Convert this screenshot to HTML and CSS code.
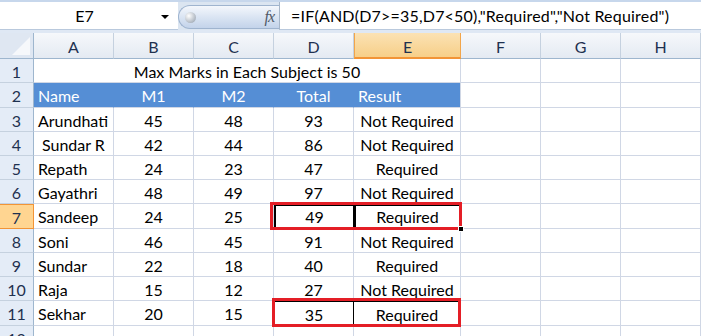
FILE: index.html
```html
<!DOCTYPE html>
<html lang="en">
<head>
    <meta charset="UTF-8">
    <title>Excel - IF AND</title>
    <link rel="stylesheet" href="styles.css">
</head>
<body>

    <!-- Barra della formula -->
    <div class="formula-bar">
        <div class="name-box">
            <span class="cell-ref">E7</span>
            <span class="drop-arrow"></span>
        </div>
        <div class="fx-btn">
            <span class="knob"></span>
            <span class="fx">fx</span>
        </div>
        <div class="formula">=IF(AND(D7&gt;=35,D7&lt;50),"Required","Not Required")</div>
    </div>

    <!-- Foglio -->
    <div class="sheet">
        <div class="corner"></div>
        <div class="col-head">A</div>
        <div class="col-head">B</div>
        <div class="col-head">C</div>
        <div class="col-head">D</div>
        <div class="col-head selected">E</div>
        <div class="col-head">F</div>
        <div class="col-head">G</div>
        <div class="col-head">H</div>

        <div class="row-head">1</div>
        <div class="cell merged">Max Marks in Each Subject is 50</div>
        <div class="cell"></div><div class="cell"></div><div class="cell"></div>

        <div class="row-head">2</div>
        <div class="cell head left">Name</div>
        <div class="cell head">M1</div>
        <div class="cell head">M2</div>
        <div class="cell head">Total</div>
        <div class="cell head left last">Result</div>
        <div class="cell"></div><div class="cell"></div><div class="cell"></div>

        <div class="row-head">3</div>
        <div class="cell left">Arundhati</div><div class="cell">45</div><div class="cell">48</div><div class="cell">93</div><div class="cell">Not Required</div>
        <div class="cell"></div><div class="cell"></div><div class="cell"></div>

        <div class="row-head">4</div>
        <div class="cell left indent">Sundar R</div><div class="cell">42</div><div class="cell">44</div><div class="cell">86</div><div class="cell">Not Required</div>
        <div class="cell"></div><div class="cell"></div><div class="cell"></div>

        <div class="row-head">5</div>
        <div class="cell left">Repath</div><div class="cell">24</div><div class="cell">23</div><div class="cell">47</div><div class="cell">Required</div>
        <div class="cell"></div><div class="cell"></div><div class="cell"></div>

        <div class="row-head">6</div>
        <div class="cell left">Gayathri</div><div class="cell">48</div><div class="cell">49</div><div class="cell">97</div><div class="cell">Not Required</div>
        <div class="cell"></div><div class="cell"></div><div class="cell"></div>

        <div class="row-head selected">7</div>
        <div class="cell left">Sandeep</div><div class="cell">24</div><div class="cell">25</div><div class="cell boxed">49</div><div class="cell active">Required</div>
        <div class="cell"></div><div class="cell"></div><div class="cell"></div>

        <div class="row-head">8</div>
        <div class="cell left">Soni</div><div class="cell">46</div><div class="cell">45</div><div class="cell">91</div><div class="cell">Not Required</div>
        <div class="cell"></div><div class="cell"></div><div class="cell"></div>

        <div class="row-head">9</div>
        <div class="cell left">Sundar</div><div class="cell">22</div><div class="cell">18</div><div class="cell">40</div><div class="cell">Required</div>
        <div class="cell"></div><div class="cell"></div><div class="cell"></div>

        <div class="row-head">10</div>
        <div class="cell left">Raja</div><div class="cell">15</div><div class="cell">12</div><div class="cell">27</div><div class="cell">Not Required</div>
        <div class="cell"></div><div class="cell"></div><div class="cell"></div>

        <div class="row-head">11</div>
        <div class="cell left">Sekhar</div><div class="cell">20</div><div class="cell">15</div><div class="cell thin-left">35</div><div class="cell thin-right">Required</div>
        <div class="cell"></div><div class="cell"></div><div class="cell"></div>

        <div class="row-head">12</div>
        <div class="cell"></div><div class="cell"></div><div class="cell"></div><div class="cell"></div><div class="cell"></div>
        <div class="cell"></div><div class="cell"></div><div class="cell"></div>

        <!-- Riquadri rossi sopra le celle -->
        <div class="red-box box-7"></div>
        <div class="red-box box-11"></div>
        <div class="fill-handle"></div>
    </div>

</body>
</html>
```

FILE: styles.css
```css
/* Stili globali */
* {
    margin: 0;
    padding: 0;
    box-sizing: border-box;
}

body {
    width: 701px;
    height: 336px;
    overflow: hidden;
    background-color: #fff;
    font-family: 'Lato', 'Liberation Sans', sans-serif;
    font-size: 16px;
    color: #000;
}

/* Barra formula */
.formula-bar {
    display: flex;
    height: 33px;
    background-color: #dbe5f1;
    border-top: 2px solid #c7d7ec;
    border-bottom: 3px solid #dfe8f4;
}

.name-box {
    width: 178px;
    display: flex;
    align-items: center;
    background-color: #fff;
    border-bottom: 1px solid #b9c9dd;
}

.cell-ref {
    flex: 1;
    text-align: center;
    padding-left: 8px;
    font-size: 16px;
}

.drop-arrow {
    width: 0;
    height: 0;
    margin-right: 9px;
    margin-top: 2px;
    border-left: 4px solid transparent;
    border-right: 4px solid transparent;
    border-top: 4px solid #000;
}

.fx-btn {
    width: 101px;
    margin-top: 3px;
    margin-bottom: 1px;
    display: flex;
    align-items: center;
    justify-content: space-between;
    padding: 0 5px 0 6px;
    border: 1px solid #9fb4cf;
    border-right: none;
    border-radius: 14px 0 0 14px;
    background: linear-gradient(#f4f7fc, #d8e3f2 55%, #c3d3ea);
}

.knob {
    width: 11px;
    height: 11px;
    border-radius: 50%;
    background: radial-gradient(circle at 35% 35%, #ffffff, #a9b2bd 75%);
}

.fx {
    font-family: 'Liberation Serif', serif;
    font-style: italic;
    font-size: 16px;
    color: #505a68;
    letter-spacing: -1px;
}

.formula {
    flex: 1;
    display: flex;
    align-items: center;
    padding-left: 11px;
    background-color: #fff;
    border-left: 1px solid #a6b6c9;
    border-bottom: 1px solid #b9c9dd;
    white-space: nowrap;
    font-size: 16px;
    letter-spacing: 0.2px;
}

/* Foglio */
.sheet {
    position: relative;
    display: grid;
    grid-template-columns: 34px 80px 80px 80px 80px 107px 80px 80px 80px;
    grid-template-rows: 26px 24px 25px 24px 24px 24px 24px 25px 24px 24px 24px 25px 24px;
}

.corner {
    position: relative;
    background-color: #dfe7f2;
    border-right: 1px solid #9eb6ce;
    border-bottom: 1px solid #9eb6ce;
}

.corner::after {
    content: '';
    position: absolute;
    right: 3px;
    bottom: 3px;
    border-left: 18px solid transparent;
    border-bottom: 18px solid #f6f8fb;
}

.col-head {
    display: flex;
    align-items: center;
    justify-content: center;
    padding-top: 2px;
    background: linear-gradient(#f6f8fb, #e4eaf2);
    border-right: 1px solid #c5d1df;
    border-bottom: 1px solid #9eb6ce;
    color: #1f3150;
}

.col-head.selected {
    background: linear-gradient(#fbe2b4, #f7cf88);
    border-left: 1px solid #f2a54a;
    border-right: 1px solid #f2a54a;
    border-bottom: 2px solid #f29436;
}

.row-head {
    display: flex;
    align-items: center;
    justify-content: center;
    padding-top: 1px;
    background-color: #e4ecf7;
    border-right: 1px solid #9eb6ce;
    border-bottom: 1px solid #c5d1df;
    color: #1f3150;
}

.row-head.selected {
    background-color: #ffd591;
    border: 1px solid #f29436;
    border-left: none;
}

.cell {
    display: flex;
    align-items: center;
    justify-content: center;
    padding-top: 1px;
    border-right: 1px solid #d0d7e5;
    border-bottom: 1px solid #d0d7e5;
    white-space: nowrap;
}

.cell.left {
    justify-content: flex-start;
    padding-left: 4px;
}

.cell.indent {
    padding-left: 8px;
}

.cell.merged {
    grid-column: span 5;
}

.cell.head {
    background-color: #558ed5;
    color: #fff;
    border-right-color: #558ed5;
}

.cell.head.last {
    border-right-color: #d0d7e5;
}

.cell.boxed {
    padding-top: 0;
    border: 2px solid #000;
    border-right-width: 1px;
}

.cell.active {
    padding-top: 0;
    border: 2px solid #000;
}

.cell.thin-left {
    border: 1px solid #000;
    border-right-color: #000;
}

.cell.thin-right {
    border-top: 1px solid #000;
    border-right: 1px solid #000;
    border-bottom: 1px solid #000;
}

/* Riquadri rossi */
.red-box {
    position: absolute;
    border: 3px solid #e41e26;
}

.box-7 {
    left: 270px;
    top: 169px;
    width: 192px;
    height: 28px;
}

.box-11 {
    left: 272px;
    top: 265px;
    width: 189px;
    height: 29px;
}

.fill-handle {
    position: absolute;
    left: 458px;
    top: 193px;
    width: 6px;
    height: 6px;
    background-color: #000;
    border: 1px solid #fff;
}
```
